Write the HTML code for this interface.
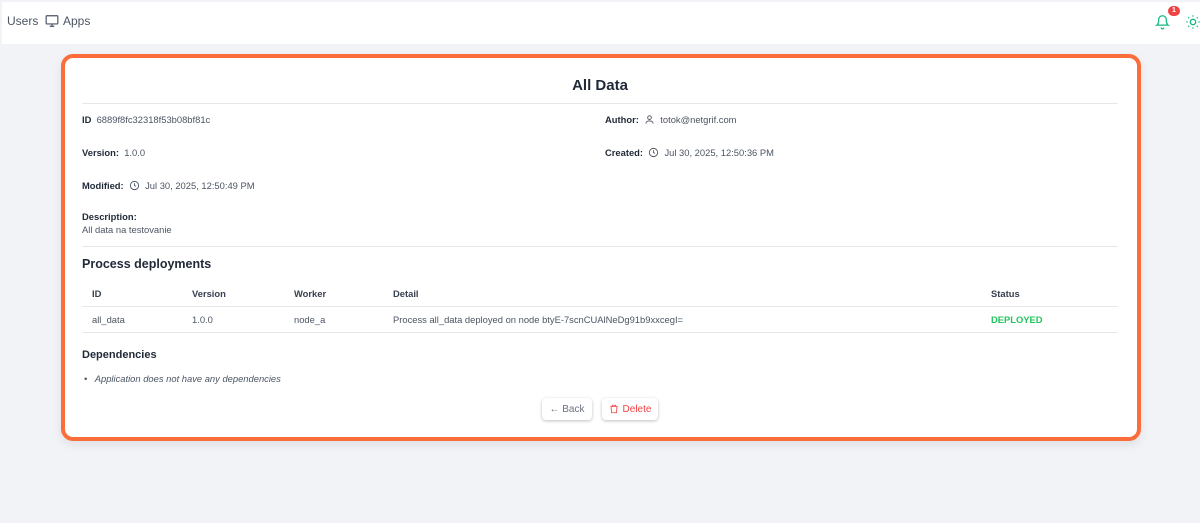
<!DOCTYPE html>
<html><head><style>
*{box-sizing:border-box;margin:0;padding:0}
body{width:1200px;height:523px;background:#f1f3f7;font-family:"Liberation Sans",sans-serif;position:relative;overflow:hidden;color:#4b5563}
.a{position:absolute;white-space:nowrap}
.hdr{position:absolute;left:2px;top:2px;width:1210px;height:42px;background:#fff;border-radius:0 10px 0 0}
.card{position:absolute;left:61px;top:54px;width:1080px;height:387px;border:4px solid #fb6d3a;border-radius:12px;background:#fff;box-shadow:0 4px 10px rgba(0,0,0,.08)}
.b{font-weight:bold;color:#1f2937}
.s{font-size:9.4px}
.line{position:absolute;left:82px;width:1036px;height:1px;background:#e5e7eb}
.th{font-size:9.4px;font-weight:bold;color:#374151}
.td{font-size:9.4px;color:#4b5563}
.btn{position:absolute;top:398px;height:22px;border-radius:4px;background:#fff;box-shadow:0 1px 3px rgba(0,0,0,.25);font-size:10px;display:flex;align-items:center;justify-content:center;gap:4px}
</style></head><body>
<div class="hdr"></div>
<div class="a" style="left:7px;top:14px;font-size:12px;color:#4b5563">Users</div>
<svg class="a" style="left:45px;top:14px" width="14" height="14" viewBox="0 0 24 24" fill="none" stroke="#4b5563" stroke-width="2"><rect x="2" y="3" width="20" height="14" rx="1"/><path d="M8 21h8M12 17v4"/></svg>
<div class="a" style="left:63px;top:14px;font-size:12px;color:#4b5563">Apps</div>
<svg class="a" style="left:1155px;top:14px" width="15" height="16" viewBox="0 0 24 24" fill="none" stroke="#10b981" stroke-width="2"><path d="M6 8a6 6 0 0 1 12 0c0 7 3 9 3 9H3s3-2 3-9M10 21a2 2 0 0 0 4 0"/></svg>
<div class="a" style="left:1168px;top:6px;width:12px;height:10px;border-radius:5px;background:#ef4444;color:#fff;font-size:7px;font-weight:bold;text-align:center;line-height:10px">1</div>
<svg class="a" style="left:1185px;top:14px" width="16" height="16" viewBox="0 0 24 24" fill="none" stroke="#10b981" stroke-width="2"><circle cx="12" cy="12" r="4"/><path d="M12 2v2M12 20v2M4.9 4.9l1.4 1.4M17.7 17.7l1.4 1.4M2 12h2M20 12h2M4.9 19.1l1.4-1.4M17.7 6.3l1.4-1.4"/></svg>
<div class="card"></div>
<div class="a b" style="left:0;width:1200px;text-align:center;top:77px;font-size:15px">All Data</div>
<div class="line" style="top:103px"></div>
<div class="a s" style="left:82px;top:114px"><span class="b">ID</span>&nbsp; 6889f8fc32318f53b08bf81c</div>
<div class="a s" style="left:605px;top:114px"><span class="b">Author:</span>&nbsp; <svg width="11" height="11" viewBox="0 0 24 24" fill="none" stroke="#4b5563" stroke-width="2" style="vertical-align:-2px"><circle cx="12" cy="8" r="4"/><path d="M4 21c0-4 4-6 8-6s8 2 8 6"/></svg>&nbsp; totok@netgrif.com</div>
<div class="a s" style="left:605px;top:147px"><span class="b">Created:</span>&nbsp; <svg width="11" height="11" viewBox="0 0 24 24" fill="none" stroke="#4b5563" stroke-width="2" style="vertical-align:-2px"><circle cx="12" cy="12" r="9"/><path d="M12 7v5l3 2"/></svg>&nbsp; Jul 30, 2025, 12:50:36 PM</div>
<div class="a s" style="left:82px;top:147px"><span class="b">Version:</span>&nbsp; 1.0.0</div>
<div class="a s" style="left:82px;top:180px"><span class="b">Modified:</span>&nbsp; <svg width="11" height="11" viewBox="0 0 24 24" fill="none" stroke="#4b5563" stroke-width="2" style="vertical-align:-2px"><circle cx="12" cy="12" r="9"/><path d="M12 7v5l3 2"/></svg>&nbsp; Jul 30, 2025, 12:50:49 PM</div>
<div class="a s b" style="left:82px;top:211px">Description:</div>
<div class="a s" style="left:82px;top:224px">All data na testovanie</div>
<div class="line" style="top:246px"></div>
<div class="a b" style="left:82px;top:257px;font-size:12.5px">Process deployments</div>
<div class="a th" style="left:92px;top:288px">ID</div>
<div class="a th" style="left:192px;top:288px">Version</div>
<div class="a th" style="left:294px;top:288px">Worker</div>
<div class="a th" style="left:393px;top:288px">Detail</div>
<div class="a th" style="left:991px;top:288px">Status</div>
<div class="line" style="top:306px"></div>
<div class="a td" style="left:92px;top:314px">all_data</div>
<div class="a td" style="left:192px;top:314px">1.0.0</div>
<div class="a td" style="left:294px;top:314px">node_a</div>
<div class="a td" style="left:393px;top:314px">Process all_data deployed on node btyE-7scnCUAlNeDg91b9xxcegI=</div>
<div class="a" style="left:991px;top:314px;font-size:9.4px;font-weight:bold;color:#22c55e">DEPLOYED</div>
<div class="line" style="top:332px"></div>
<div class="a b" style="left:82px;top:349px;font-size:11px">Dependencies</div>
<div class="a" style="left:84px;top:373px;font-size:9.4px;font-style:italic;color:#4b5563">•&nbsp;&nbsp; Application does not have any dependencies</div>
<div class="btn" style="left:542px;width:50px;color:#6b7280">← Back</div>
<div class="btn" style="left:602px;width:56px;color:#ef4444"><svg width="10" height="10" viewBox="0 0 24 24" fill="none" stroke="#ef4444" stroke-width="2"><path d="M3 6h18M8 6V3h8v3M5 6l1 15h12l1-15"/></svg>Delete</div>
</body></html>
